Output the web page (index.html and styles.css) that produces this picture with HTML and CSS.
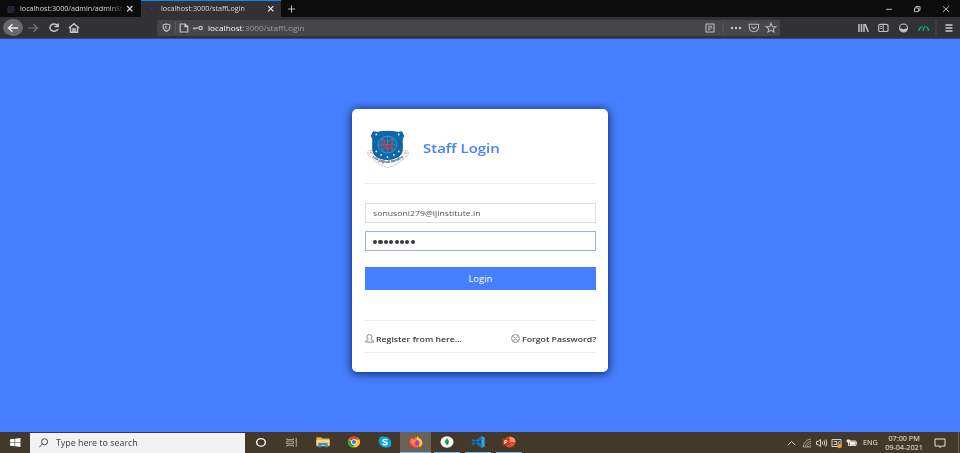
FILE: index.html
```html
<!DOCTYPE html>
<html lang="en">
<head>
<meta charset="utf-8">
<title>Staff Login</title>
<link rel="stylesheet" href="styles.css">
</head>
<body>
<header class="tabs">
  <div class="tab"><svg class="fav" viewBox="0 0 10 10"><path d="M2 1h6l1 2v3L7 9H2L1 7V3z" fill="#29293c"/><path d="M7 5a2 2 0 1 0-2 2h3" fill="none" stroke="#111122"/></svg><span class="label fade"><span class="wide">localhost:3000/admin/adminSt</span></span><svg class="close" viewBox="0 0 8 8"><path d="M1.2 1.2 6.8 6.8M6.8 1.2 1.2 6.8"/></svg></div>
  <div class="tab active"><svg class="fav" viewBox="0 0 10 10"><path d="M2 1h6l1 2v3L7 9H2L1 7V3z" fill="#29293f"/><path d="M7 5a2 2 0 1 0-2 2h3" fill="none" stroke="#45455a"/></svg><span class="label"><span class="wide">localhost:3000/staffLogin</span></span><svg class="close" viewBox="0 0 8 8"><path d="M1.2 1.2 6.8 6.8M6.8 1.2 1.2 6.8"/></svg></div>
  <svg class="plus" viewBox="0 0 10 10"><path d="M5 .5v9M.5 5h9"/></svg>
  <svg class="winbtns" viewBox="0 0 64 10"><path d="M0 5.300h6"/><path d="M28.500 4h4v3.700h-4zM30 4V2.500h4v3.800h-1.500M57 2.300l6 5.600M63 2.300l-6 5.600"/></svg>
</header>
<nav class="toolbar">
  <span class="back"><svg viewBox="0 0 12 12"><path d="M11 6H1.500M5.500 2.200 1.500 6l4 3.800"/></svg></span>
  <svg class="ic forward" viewBox="0 0 12 12"><path d="M1 6h9.500M6.500 2.200l4 3.800-4 3.800"/></svg>
  <svg class="ic reload" viewBox="0 0 12 12"><path d="M9.500 3.500A4.200 3.600 0 1 0 10 7M10.200 1.500v3H6.500"/></svg>
  <svg class="ic home" viewBox="0 0 12 12"><path d="M1 6 6 1.700 11 6M2.500 5.500v4.800h7V5.500M5 10V7h2v3"/></svg>
  <div class="urlbar">
    <svg class="ic shield" viewBox="0 0 10 10"><path d="M5 1 8.700 2v2.500Q8.500 8 5 9.300 1.500 8 1.300 4.500V2z"/><path d="M5 3v4Q3.300 6 3.200 3.300z" fill="#bbb" stroke="none"/></svg>
    <i class="sep"></i>
    <svg class="ic doc" viewBox="0 0 10 10"><path d="M1.200 1h4.800l2.800 2.500V9H1.200zM6 1v2.700h2.600"/></svg>
    <svg class="ic key" viewBox="0 0 10 8"><circle cx="7.700" cy="4" r="1.700"/><path d="M6 4H0M1 4v1.500M3 4v1.300"/></svg>
    <span class="url"><b>localhost</b>:3000/staffLogin</span>
    <svg class="urlicons" viewBox="0 0 72 12"><path d="M1 2h8v8H1zM3 4.200h4.200M3 6h4.200M3 7.700h2.200"/><path d="M18 .5v11" stroke="#5b5b62"/><g fill="#c4c4c6" stroke="none"><circle cx="27" cy="6" r="1.200"/><circle cx="31" cy="6" r="1.200"/><circle cx="35" cy="6" r="1.200"/></g><path d="M44.300 2.300h9.200v3Q53.300 9.700 48.900 9.700T44.300 5.300zM46.300 4.700l2.600 2.200 2.600-2.200M66 1.500l1.300 3 3.500.2-2.600 2.200.8 3-3-1.600-3 1.600.8-3-2.600-2.200 3.500-.2z"/></svg>
  </div>
  <svg class="tools" viewBox="0 0 96 22"><g stroke="#c1c1c3"><path d="M1 7v8M3.500 7v8M6 7v8M7.200 7l3 8" stroke-width="1.500"/><rect x="20.700" y="7.300" width="9.300" height="7.200" rx="1.300" stroke-width="1.200"/><path d="M25.200 7v8M22.300 9.500H24M22.300 11.500H24"/><circle cx="45.500" cy="11" r="4" stroke-width="1.100"/><path d="M41.800 11.500h7.400q-.7 3.500-3.700 3.500t-3.700-3.500z" fill="#c1c1c3" stroke="none"/><ellipse cx="45.500" cy="10.300" rx="2" ry="1.900" fill="#323234" stroke="none"/></g><path d="M60.700 14q.3-3.600 3.800-4.300M64.800 14l2-4.700M67.800 9.700q2.500.9 2.900 4.300" stroke="#16a47a" stroke-width="1.400"/><path d="M78 2v18" stroke="#48484c"/><path d="M87.500 8h7M87.500 11h7M87.500 14h7" stroke="#ccc" stroke-width="1.300"/></svg>
</nav>
<main class="page">
  <form class="card">
    <div class="brand">
      <svg class="logo" viewBox="0 0 44 38">
        <path d="M6 20Q1 19 1 23q0 3 4 4 5 7 16.500 10.500Q34 34 39 27q4-1 4-4 0-4-5-3" fill="#fff" stroke="#dcbebe" stroke-width=".9"/>
        <path d="M2 23q3-2 4 1m32 0q1-3 4-1M4 21l2 3m34-3-2 3" fill="none" stroke="#d9aaaa"/>
        <path d="M7 .7q4 1.300 7.500 0 7-.8 14 0 4 1.300 7.500 0l2.200 4.500q-2.500 3-1.500 8V19q0 6-7 9-5 1.500-8.200 3-3.200-1.500-8.200-3-7-3-7-9v-6q1-5-1.500-8z" fill="#0969ae" stroke="#093d69" stroke-width=".8"/>
        <ellipse cx="21.500" cy="14" rx="9.500" ry="8.600" fill="#1768a0" stroke="#6f9fc0" stroke-width=".7"/>
        <path d="M12 14h19M21.500 5.500v17M14 9q7 3 15 0M14 19q7-3 15 0M18 6q-5 8 0 16m7-16q5 8 0 16" fill="none" stroke="#5b88ab" stroke-width=".6"/>
        <path d="M18 9v6.500h4.500M25.500 11.500V16q0 3-4 1.500" fill="none" stroke="#ef2638" stroke-width="1.800"/>
        <g fill="#fff"><circle cx="10" cy="3.500" r=".9"/><circle cx="33" cy="3.500" r=".9"/><circle cx="10" cy="21" r=".9"/><circle cx="33" cy="21" r=".9"/><circle cx="15" cy="24.500" r=".9"/><circle cx="28" cy="24.500" r=".9"/><circle cx="21.500" cy="26.800" r=".9"/></g>
        <path d="M5 23.500Q21 36 38 23.500l1 4Q21 39 4.500 27.500z" fill="#fff"/>
        <path id="ribbon" d="M5.500 27Q21 39 39 26.500" fill="none"/>
        <text class="motto"><textPath href="#ribbon" textLength="35">Lok Jagruti Kendra</textPath></text>
      </svg>
      <h1>Staff Login</h1>
    </div>
    <div class="field"><span>sonusoni279@ljinstitute.in</span></div>
    <div class="field focus"><i></i><i></i><i></i><i></i><i></i><i></i><i></i><i></i></div>
    <div class="login"><span>Login</span></div>
    <div class="links">
      <a><svg viewBox="0 0 10 10"><path d="M3.400 6Q1 3 3 1.300q2-1.300 4 0Q9 3 6.600 6q0 .8 2.400 1.400.7.600.5 1.600h-9q-.2-1 .5-1.600Q3.400 6.800 3.400 6z"/></svg><span class="register">Register from here...</span></a>
      <a><svg viewBox="0 0 10 10"><circle cx="5" cy="5" r="4.400"/><path d="m2.400 3 1.900 1.200M7.600 3 5.700 4.200M2.500 7Q5 4.500 7.500 7"/></svg><span class="forgot">Forgot Password?</span></a>
    </div>
  </form>
</main>
<footer class="taskbar">
  <div class="start"><svg viewBox="0 0 12 10"><path d="M0 1.500 5 .8v3.900H0zM5.600.7 11.500 0v4.700H5.600zM0 5.300h5v3.900L0 8.500zM5.600 5.300h5.900V10l-5.900-.7z" fill="#fff"/></svg></div>
  <div class="search"><svg viewBox="0 0 12 12"><circle cx="7.300" cy="4.500" r="3.600"/><path d="M4.700 7.200.8 11"/></svg><span>Type here to search</span></div>
  <div class="app"><svg viewBox="0 0 14 14"><ellipse cx="7" cy="7.500" rx="4.600" ry="4.400" fill="none" stroke="#fff" stroke-width="1.500"/></svg></div>
  <div class="app"><svg viewBox="0 0 14 14"><path d="M1.500 2.500v1.700h7V2.500M1.500 6h7v3h-7zM1.500 12.500V11h7v1.500M11.500 2v10.500M10.700 6h1.700" fill="none" stroke="#b9b5ab"/></svg></div>
  <div class="app"><svg viewBox="0 0 14 14"><path d="M0 1.500h5L6.500 3H14v9H0z" fill="#e9af36"/><path d="M0 4.500h14V11H0z" fill="#ffda78"/><path d="M2 13V8h10v5H9v-2.500H5V13z" fill="#3594d9"/></svg></div>
  <div class="app"><svg viewBox="0 0 14 14"><circle cx="7" cy="7" r="6.500" fill="#fbc524"/><path d="M7 7 1.400 3.700Q3.500.5 7 .5q4 0 5.900 3.500H7z" fill="#e63e31"/><path d="M1.400 3.700 4.500 8.500 7.500 10 6 13.400Q.5 12 .5 7q0-2 .9-3.300" fill="#2ba34b"/><circle cx="7" cy="7" r="3.100" fill="#fff"/><circle cx="7" cy="7" r="2.400" fill="#367ed9"/></svg></div>
  <div class="app"><svg viewBox="0 0 14 14"><rect x=".4" y=".5" width="10" height="10" rx="4.500" fill="#0da5e9"/><rect x="3.600" y="3.500" width="10" height="10" rx="4.500" fill="#0da5e9"/><circle cx="7" cy="7" r="6" fill="#0da5e9"/><path d="M9.500 4.700Q7.500 3.400 5.500 4.300 4 6 6 6.700q3 .5 3.300 1.600Q9 10.400 7 10.200 5.500 10.100 4.500 9" fill="none" stroke="#fff" stroke-width="1.500"/></svg></div>
  <div class="app current"><svg viewBox="0 0 14 14"><path d="M.6 4.500 2 2l2 1.500L7 1l2 2.500L11 3q3 3 2.800 6-1.800 4.500-6.800 4.500T.2 8z" fill="#ff6538"/><path d="M8.500 0q1.500 3 4 4 1.800 3 1 6-1 2-3 3 1-6-3-9z" fill="#ffc934"/><path d="M.6 8q1.400 5 7.400 5-6 2-8-3z" fill="#ee294f"/><circle cx="7.500" cy="7.700" r="3.100" fill="#8449d8"/><path d="M2 4.500q4-1 6 1L5.500 7.500 7 10Q2 10 2 4.500z" fill="#ff8e2c"/></svg></div>
  <div class="app open"><svg viewBox="0 0 14 14"><ellipse cx="7" cy="7" rx="6.900" ry="6.700" fill="#fff"/><path d="M7 2.800Q10.800 7 7 10.500 3.200 7 7 2.800zM7 10v1.500" fill="#13934b" stroke="#13934b" stroke-width=".4"/></svg></div>
  <div class="app open"><svg viewBox="0 0 14 14"><path d="M10.500 0 14 1.500v11L10.500 14z" fill="#27a7ef"/><path d="M10.500 0 0 9l1.500 1.700L11 4M0 5l1.500-1.700L11 10v4z" fill="#0879c1"/></svg></div>
  <div class="app open"><svg viewBox="0 0 14 14"><circle cx="7.700" cy="7" r="6.300" fill="#df4b2d"/><path d="M7.700.7A6.300 6.300 0 0 1 14 7H7.700z" fill="#ff8e70"/><rect y="3.300" width="7.500" height="7.500" rx=".8" fill="#bd361d"/><path d="M2.600 9.300V5.200h1.800q1.600 1.200 0 2.400H2.600" fill="none" stroke="#fff"/></svg></div>
  <svg class="tray" viewBox="0 0 72 14"><path d="M.8 9.200 4.600 5.500l3.800 3.700"/><g stroke="#aaa497"><path d="M16 11q1-7 8-8M18 11q1-5 6-6M20 11q.5-3 4-4M22 11l2-2M16 11h8"/></g><path d="M29.500 5.500H31L33.500 3.500v7l-2.500-2h-1.500zM35.200 5.500q1 1.500 0 3M37 4.500q1.500 2.500 0 5M38.800 3.500q2 3.500 0 7M45 3.500h9v7h-9zM46.700 5.500h3v3h-3M50.700 8l2-3"/><circle cx="52.500" cy="10" r="2.200" fill="#ff9416" stroke="none"/><path d="M62 5h7v4.500h-7.500V6M69.600 6.500v1.500"/><path d="M63 6h5v2.500h-5zM60 4h3v2h-3z" fill="#fff"/></svg>
  <span class="lang">ENG</span>
  <div class="clock"><span>07:00 PM</span><span>09-04-2021</span></div>
  <svg class="notice" viewBox="0 0 12 12"><path d="M1 2h10v7H7.500L6 10.700V9H1z"/></svg>
  <i class="peek"></i>
</footer>
</body>
</html>
```
FILE: styles.css
```css
* { box-sizing: border-box; }
body { margin: 0; width: 960px; height: 453px; overflow: hidden; display: flex; flex-direction: column; font-family: "Open Sans", "Noto Sans", sans-serif; }
svg { display: block; flex: none; overflow: visible; }
span { white-space: nowrap; }
.tabs { height: 17px; flex: none; background: #0c0c0d; display: flex; align-items: center; }
.tab { width: 141px; height: 17px; padding: 1px 7px 0 6px; display: flex; align-items: center; color: #d6d6d7; font-size: 7px; }
.tab.active { width: 140px; background: #323234; border-top: 1px solid #0a84ff; padding-top: 0; }
.fav { width: 10px; height: 9px; }
.label { width: 105px; margin-left: 4px; line-height: 12px; }
.label.fade { -webkit-mask-image: linear-gradient(90deg, #000 84%, transparent); mask-image: linear-gradient(90deg, #000 84%, transparent); }
.wide { display: inline-block; transform: scaleX(1.025); transform-origin: left; }
.close { width: 7.5px; height: 7.5px; margin-left: 1px; fill: none; stroke: #e5e5e5; stroke-width: 1.4; }
.plus { width: 9px; height: 8px; margin-left: 6px; fill: none; stroke: #d0d0d0; stroke-width: 1.1; }
.winbtns { width: 64px; height: 10px; margin-left: auto; margin-right: 10px; fill: none; stroke: #c8c8c8; stroke-width: .9; }
.toolbar { height: 22px; flex: none; background: #323234; border-bottom: 1px solid #3b4a6c; display: flex; align-items: center; }
.ic { fill: none; stroke: #c4c4c6; stroke-width: 1.2; }
.back { width: 20px; height: 17px; margin-left: 3px; border-radius: 50%; background: #69696b; display: grid; place-items: center; }
.back svg { width: 12px; height: 12px; fill: none; stroke: #eee; stroke-width: 1.4; }
.forward { width: 12px; height: 12px; margin-left: 4px; stroke: #77777a; }
.reload { width: 12px; height: 12px; margin-left: 9px; stroke-width: 1.5; }
.home { width: 12px; height: 12px; margin-left: 8px; stroke-width: 1.5; }
.urlbar { width: 623px; height: 16px; margin-left: 77px; border-radius: 2px; background: #474749; display: flex; align-items: center; }
.shield { width: 9px; height: 9px; margin-left: 5px; }
.sep { width: 1px; height: 11px; margin: 0 3px 0 4px; background: #5d5d60; }
.doc { width: 10px; height: 10px; }
.key { width: 10px; height: 8px; margin-left: 4px; }
.url { color: #99999c; font-size: 7.5px; margin-left: 5px; transform: scaleX(1.1); transform-origin: left; }
.url b { color: #f4f4f4; font-weight: 500; }
.urlicons { width: 72px; height: 12px; margin-left: auto; margin-right: 3px; fill: none; stroke: #b8b8bb; stroke-width: 1.1; }
.tools { width: 96px; height: 22px; margin-left: auto; margin-right: 6px; fill: none; }
.page { flex: 1; background: #467fff; display: grid; place-items: start center; padding-top: 70px; }
.card { width: 256px; height: 263px; padding: 0 12px 0 13px; background: #fff; border-radius: 5px; box-shadow: 0 1px 9px 1px rgba(0, 16, 65, .75); color: #343942; }
.brand { height: 75px; border-bottom: 1px solid #ececee; display: flex; padding: 22px 0 0 2px; }
.logo { width: 44px; height: 37px; margin-left: -1px; }
.motto { font-size: 4.1px; font-weight: 700; fill: #1e5978; }
h1 { font-size: 13.2px; line-height: 20px; font-weight: 600; color: #467fff; margin: 7px 0 0 13px; height: 20px; transform: scaleX(1.135); transform-origin: left; white-space: nowrap; }
.field { height: 20px; margin-top: 19px; border: 1px solid #dedee2; padding-left: 7px; display: flex; align-items: center; color: #50555e; font-size: 8px; }
.field span { transform: scaleX(1.09); transform-origin: left; line-height: 10px; margin-bottom: 1px; }
.field.focus { margin-top: 8px; border-color: #91b2f7; gap: 1.2px; }
.field i { width: 4.2px; height: 4px; border-radius: 50%; background: #343942; margin-top: 1px; }
.login { height: 23px; margin-top: 16px; background: #467fff; color: #fff; display: grid; place-items: center; font-size: 8.2px; }
.login span { transform: scaleX(1.15) translateY(-.5px); }
.links { height: 33px; margin-top: 30px; border-top: 1px solid #ececee; border-bottom: 1px solid #ececee; display: flex; justify-content: space-between; align-items: center; padding-top: 4px; font-size: 7.7px; font-weight: 600; color: #343942; }
.links a { display: flex; align-items: center; }
.links svg { width: 9px; height: 9px; fill: none; stroke: #68727e; stroke-width: .9; }
.links span { margin-left: 2px; transform: scaleX(1.135); transform-origin: left; }
.links .forgot { width: 74px; }
.taskbar { height: 21px; flex: none; background: #43392a; display: flex; align-items: center; color: #e6e2da; font-family: "Noto Sans", sans-serif; }
.start { width: 30px; height: 21px; display: grid; place-items: center; }
.start svg { width: 11px; height: 9px; }
.search { width: 215px; height: 20px; background: #f2f2f2; display: flex; align-items: center; color: #4a4a4a; font-size: 8px; padding-left: 8px; }
.search svg { width: 11px; height: 10px; fill: none; stroke: #363636; stroke-width: 1.1; }
.search span { margin-left: 6.5px; transform: scaleX(1.11); transform-origin: left; }
.app { width: 31px; height: 21px; display: grid; place-items: center; border-bottom: 1px solid transparent; }
.app svg { width: 14px; height: 12px; transform: scaleX(1.1); }
.app.open { border-bottom: 1px solid #76b9ed; width: 26px; margin: 0 2px 0 3px; }
.app.current { background: #6b6255; border-color: #76b9ed; }
.tray { width: 72px; height: 14px; margin-left: auto; fill: none; stroke: #e7e3da; stroke-width: .9; }
.lang { width: 15px; margin-left: 4px; font-size: 6.5px; transform: scaleX(1.11); transform-origin: left; }
.clock { width: 40px; margin-left: 6px; display: flex; flex-direction: column; align-items: center; font-size: 6.5px; line-height: 9px; }
.clock span { transform: scaleX(1.11) translateY(-.5px); }
.notice { width: 12px; height: 12px; margin-left: 10px; margin-right: 12px; fill: none; stroke: #e6e2da; stroke-width: 1; }
.peek { width: 1px; height: 21px; margin-right: 1px; background: #6a6255; }
```
